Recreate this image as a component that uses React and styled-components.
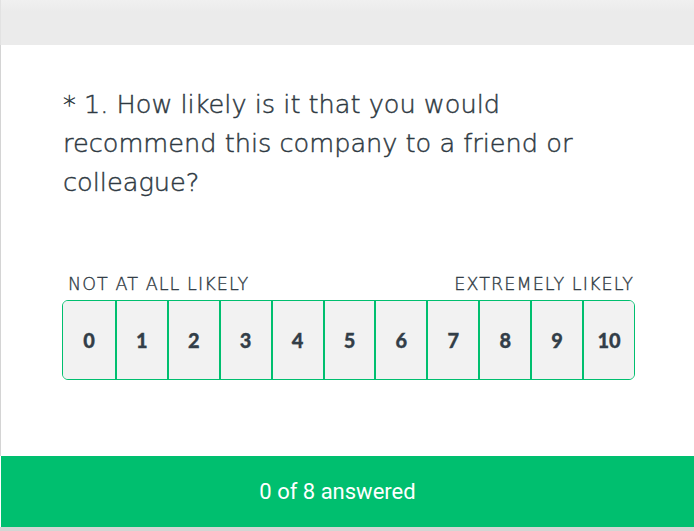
import React from "react";
import styled, { createGlobalStyle } from "styled-components";

const GlobalStyle = createGlobalStyle`
    html, body {
        margin: 0;
        padding: 0;
        background: #ffffff;
    }
    * {
        box-sizing: border-box;
    }
`;

const Page = styled.div`
    width: 694px;
    height: 531px;
    display: flex;
    flex-direction: column;
    overflow: hidden;
`;

const TopBar = styled.div`
    height: 45px;
    flex-shrink: 0;
    background: linear-gradient(#f0f0f0, #ebebeb 12px);
    border-left: 1px solid #e2e2e2;
`;

const Survey = styled.div`
    flex: 1;
    display: flex;
    flex-direction: column;
    border-left: 1px solid #d4d4d4;
    padding: 40px 59px 0 61px;
`;

const Question = styled.h2`
    margin: 0 0 0 1px;
    font-family: "DejaVu Sans", "Noto Sans", sans-serif;
    font-weight: 200;
    font-size: 25.6px;
    line-height: 39px;
    color: #2e3942;
    -webkit-text-stroke: 0.45px #2e3942;
`;

const Labels = styled.div`
    display: flex;
    justify-content: space-between;
    margin: 72px 0 6px;
    padding: 0 1px 0 6px;
    font-family: "DejaVu Sans", "Noto Sans", sans-serif;
    font-weight: 200;
    font-size: 17.5px;
    letter-spacing: 1.1px;
    line-height: 20px;
    color: #2e3942;
    -webkit-text-stroke: 0.35px #2e3942;
`;

const Scale = styled.div`
    display: grid;
    grid-template-columns: repeat(11, 1fr);
    height: 80px;
    border: 1px solid #00bf6f;
    border-radius: 6px;
    overflow: hidden;
    background: #f2f2f2;
`;

const Option = styled.button`
    display: flex;
    align-items: center;
    justify-content: center;
    border: none;
    border-left: ${(p) => (p.$first ? "none" : "2px solid #00bf6f")};
    background: #f2f2f2;
    padding: 0;
    font-family: "Lato", "Inter", sans-serif;
    font-weight: 900;
    font-size: 20px;
    color: #333e48;
    -webkit-text-stroke: 0.3px #333e48;
    cursor: pointer;
`;

const Footer = styled.div`
    margin-left: 1px;
    padding-right: 20px;
    height: 71px;
    flex-shrink: 0;
    background: #00bf6f;
    display: flex;
    align-items: center;
    justify-content: center;
    font-family: "Roboto", sans-serif;
    font-size: 22px;
    color: #ffffff;
`;

const BottomEdge = styled.div`
    height: 4px;
    flex-shrink: 0;
    background: #d3d6d4;
`;

const scores = [0, 1, 2, 3, 4, 5, 6, 7, 8, 9, 10];

function App() {
    return (
        <>
            <GlobalStyle />
            <Page>
                <TopBar />
                <Survey>
                    <Question>
                        * 1. How likely is it that you would recommend this company to a friend or colleague?
                    </Question>
                    <Labels>
                        <span>NOT AT ALL LIKELY</span>
                        <span>EXTREMELY LIKELY</span>
                    </Labels>
                    <Scale>
                        {scores.map((n, i) => (
                            <Option key={n} $first={i === 0}>{n}</Option>
                        ))}
                    </Scale>
                </Survey>
                <Footer>0 of 8 answered</Footer>
                <BottomEdge />
            </Page>
        </>
    );
}

export default App;
